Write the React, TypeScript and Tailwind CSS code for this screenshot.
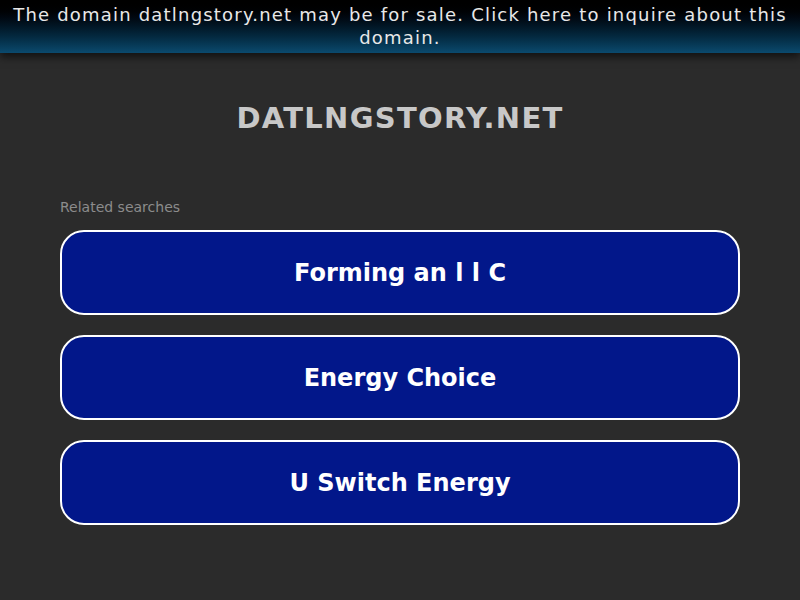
const searches = ["Forming an l l C", "Energy Choice", "U Switch Energy"];

export default function App() {
  return (
    <div className="min-h-[600px] bg-[#2b2b2b] font-['DejaVu_Sans',sans-serif]">
      <div className="relative bg-gradient-to-b from-[#000000] to-[#0b4a6e] px-2 pt-[3px] pb-[4px] text-center text-[18px] leading-[23px] tracking-[1.2px] text-[#e8e8e8] shadow-[0_4px_8px_rgba(0,0,0,0.6)]">
        The domain datlngstory.net may be for sale. Click here to inquire about this domain.
      </div>
      <div className="pt-[45px] text-center text-[29px] font-bold leading-[40px] tracking-[1.3px] text-[#c8c8c8]">
        DATLNGSTORY.NET
      </div>
      <div className="px-[60px] pt-[60px]">
        <p className="text-[14px] leading-[18px] text-[#8c8c8c]">Related searches</p>
        <div className="mt-[14px] flex flex-col gap-[20px]">
          {searches.map((s) => (
            <a
              key={s}
              href="#"
              className="flex h-[85px] items-center justify-center rounded-[24px] border-2 border-white bg-[#02178a] text-[24px] font-bold text-white"
            >
              {s}
            </a>
          ))}
        </div>
      </div>
    </div>
  );
}
